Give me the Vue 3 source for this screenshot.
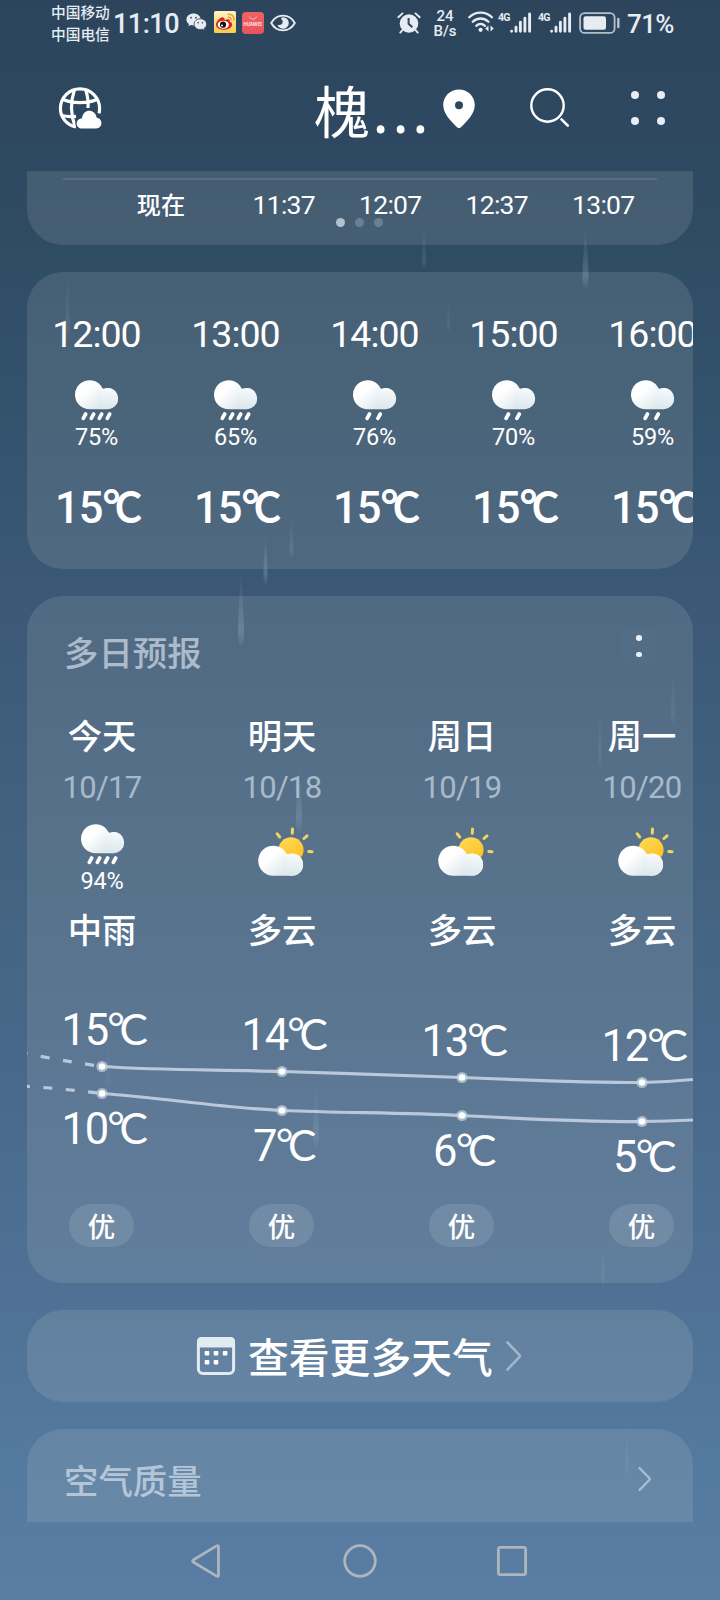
<script setup>
const nowcast = ['11:37', '12:07', '12:37', '13:07']

const hours = [
  { time: '12:00', rain: '75%', heavy: true, temp: 15 },
  { time: '13:00', rain: '65%', heavy: true, temp: 15 },
  { time: '14:00', rain: '76%', heavy: false, temp: 15 },
  { time: '15:00', rain: '70%', heavy: false, temp: 15 },
  { time: '16:00', rain: '59%', heavy: false, temp: 15 },
]

const days = [
  { name: '今天', date: '10/17', rain: '94%', text: '中雨', high: 15, low: 10, hy: 116.5, ly: 143.5 },
  { name: '明天', date: '10/18', text: '多云', high: 14, low: 7, hy: 121.5, ly: 160.5 },
  { name: '周日', date: '10/19', text: '多云', high: 13, low: 6, hy: 127.5, ly: 165.5 },
  { name: '周一', date: '10/20', text: '多云', high: 12, low: 5, hy: 132.5, ly: 171.5 },
]

const dayX = (i) => 75 + i * 180

// Falling rain behind the cards: x, top, length, width, opacity
const streaks = [
  [67.5, 270, 70, 5, 0.09],
  [424, 226, 42, 4, 0.12],
  [585.5, 225, 63, 6, 0.2],
  [448.5, 298, 34, 3, 0.08],
  [291.5, 515, 43, 4, 0.12],
  [265.5, 530, 54, 4, 0.2],
  [241, 570, 76, 6, 0.2],
  [299, 762, 70, 6, 0.16],
  [600, 700, 66, 4, 0.08],
  [673, 668, 56, 4, 0.08],
  [108, 1030, 60, 5, 0.06],
  [316, 1080, 68, 6, 0.13],
  [603, 1245, 40, 3, 0.1],
  [627, 1420, 55, 3, 0.08],
]

const streakPath = ([x, y, h, w]) =>
  `M${x} ${y}Q${x + w / 2} ${y + h * 0.6} ${x + w / 2} ${y + h * 0.85}Q${x + w / 2} ${y + h} ${x} ${y + h}` +
  `Q${x - w / 2} ${y + h} ${x - w / 2} ${y + h * 0.85}Q${x - w / 2} ${y + h * 0.6} ${x} ${y}z`
</script>

<template>
  <div class="screen">
    <svg class="rain" width="720" height="1600" viewBox="0 0 720 1600">
      <defs>
        <linearGradient id="streak" x1="0" y1="0" x2="0" y2="1">
          <stop offset="0" stop-color="#c8dcec" stop-opacity="0" />
          <stop offset="0.8" stop-color="#c8dcec" stop-opacity="1" />
          <stop offset="1" stop-color="#c8dcec" stop-opacity="0.2" />
        </linearGradient>
        <linearGradient id="cloudBig" x1="0" y1="0.1" x2="1" y2="0.9">
          <stop offset="0.3" stop-color="#ffffff" />
          <stop offset="0.75" stop-color="#dfe9ed" />
          <stop offset="1" stop-color="#e4edf1" />
        </linearGradient>
        <linearGradient id="cloudSmall" x1="0.5" y1="0" x2="0.4" y2="1">
          <stop offset="0" stop-color="#f6fafb" />
          <stop offset="1" stop-color="#dbe7ec" />
        </linearGradient>
        <linearGradient id="sun" x1="0" y1="0" x2="0.6" y2="1">
          <stop offset="0" stop-color="#ffdb5c" />
          <stop offset="1" stop-color="#fdc11f" />
        </linearGradient>
        <linearGradient id="weibo" x1="0" y1="0" x2="0" y2="1">
          <stop offset="0" stop-color="#fdf6c8" />
          <stop offset="1" stop-color="#f7cd4b" />
        </linearGradient>
      </defs>
      <path v-for="(s, i) in streaks" :key="i" :d="streakPath(s)" fill="url(#streak)" :opacity="s[4]" />
    </svg>

    <div class="status">
      <div class="carriers"><span>中国移动</span><span>中国电信</span></div>
      <span class="clock">11:10</span>
      <svg class="wechat" width="21" height="19" viewBox="0 0 21 19">
        <path d="M7.6 0.5C3.5 0.5 0.4 3.1 0.4 6.5c0 1.9 1 3.5 2.6 4.600l-.7 2.200 2.600-1.300c.9.300 1.700.4 2.700.4C11.700 12.400 14.700 9.800 14.700 6.500S11.700.5 7.600.5z" fill="#e6ecf2" />
        <path d="M14.300 5.800c-3.500 0-6.200 2.400-6.200 5.400s2.700 5.400 6.200 5.400c.8 0 1.500-.1 2.200-.3l2.200 1.200-.6-2c1.500-1 2.500-2.500 2.500-4.300 0-3-2.800-5.400-6.300-5.400z" fill="#e6ecf2" stroke="#2d475e" stroke-width="0.8" />
        <g fill="#2d475e">
          <circle cx="5" cy="4.700" r="0.9" /><circle cx="10" cy="4.700" r="0.9" />
          <circle cx="12.200" cy="9.700" r="0.8" /><circle cx="16.400" cy="9.700" r="0.8" />
        </g>
      </svg>
      <svg class="weibo" width="22" height="22" viewBox="0 0 22 22">
        <rect width="22" height="22" rx="1.500" fill="url(#weibo)" />
        <path d="M9.500 6.700C7.300 4.800 2.500 9.800 2 13.300c-.5 3.300 3.600 5.500 7.800 5.500 4.800 0 8.400-2.600 8.400-5.300 0-1.700-1.400-2.500-2.500-2.800.7-2.500-.8-3.300-5.300-1.700.4-1.200.2-1.900-.9-2.300z" fill="#d8231f" />
        <ellipse cx="9.300" cy="13.700" rx="5.600" ry="4" fill="#fff" />
        <circle cx="9" cy="13.700" r="3.100" fill="#151515" />
        <circle cx="8" cy="14.600" r="1" fill="#fff" />
        <path d="M14.300 6.300c2-.3 3 .8 2.700 2.600M14.200 3.400c4-.6 6.300 2 5.600 5.800" fill="none" stroke="#eba032" stroke-width="1.500" stroke-linecap="round" />
      </svg>
      <span class="mall">
        <svg width="22" height="10" viewBox="0 0 22 10"><path d="M7.500 4.500c.6 3.400 6.400 3.400 7 0" fill="none" stroke="#ffc9c9" stroke-width="0.9" /></svg>
        <b>HUAWEI</b>
      </span>
      <svg class="eye" width="26" height="18" viewBox="0 0 26 18">
        <path d="M1.200 9C6.500-.8 19.500-.8 24.800 9 19.500 18.800 6.500 18.800 1.200 9z" fill="none" stroke="#e6ecf2" stroke-width="1.900" />
        <path d="M13 3.200a5.800 5.800 0 1 1-5.600 7.200c2 1.300 5.300.300 5.300-2.500 0-1.900-1-2.600-1.800-2.900.2-.9.900-1.800 2.100-1.800z" fill="#e6ecf2" />
      </svg>

      <svg class="alarm" width="24" height="22" viewBox="0 0 24 22">
        <circle cx="12" cy="11.500" r="9.300" fill="#e6ecf2" />
        <path d="M1.300 5.200 5.500 1.400M22.700 5.200 18.500 1.400M5.500 18 3.300 20.600M18.500 18l2.200 2.600" stroke="#e6ecf2" stroke-width="1.900" stroke-linecap="round" />
        <path d="M11.600 6v5.800l3.700 3.400" fill="none" stroke="#2d475e" stroke-width="2" />
      </svg>
      <div class="speed"><span>24</span><span>B/s</span></div>
      <svg class="wifi" width="27" height="22" viewBox="0 0 27 22">
        <path d="M1.300 6.300c6.300-6.300 16.300-6.300 22.600 0M4.800 10.800c4.400-4.400 11.200-4.400 15.600 0M8.300 14.800c2.500-2.400 6.100-2.400 8.600 0" fill="none" stroke="#e6ecf2" stroke-width="2.300" stroke-linecap="round" />
        <circle cx="12.600" cy="18.800" r="2.100" fill="#e6ecf2" />
        <path d="m20.500 14.500-3.300 3 3.300 3zM22.500 14.500l3.300 3-3.300 3z" fill="#e6ecf2" />
      </svg>
      <div v-for="n in 2" :key="n" class="signal">
        <span>4G</span>
        <svg width="22" height="22" viewBox="0 0 22 22">
          <path d="M1.600 19.100v.2M6 15.200v4.100M10.400 10.200v9.100M14.900 6.100v13.200M19.600 2v17.300" stroke="#e6ecf2" stroke-width="2.900" stroke-linecap="round" />
        </svg>
      </div>
      <svg class="battery" width="42" height="22" viewBox="0 0 42 22">
        <rect x="1.100" y="1.100" width="34.500" height="19.800" rx="4.500" fill="none" stroke="#b4c0cb" stroke-width="1.800" />
        <rect x="4.500" y="4.200" width="22.500" height="13.600" rx="2.200" fill="#e6ecf2" />
        <path d="M39.300 7v8" stroke="#b4c0cb" stroke-width="2.500" stroke-linecap="round" />
      </svg>
      <span class="level">71%</span>
    </div>

    <header class="header">
      <svg class="globe" width="44" height="44" viewBox="0 0 44 44">
        <g fill="none" stroke="#fff" stroke-width="3.200">
          <path d="M18 41C8.500 38.800 2.400 31.300 2.400 22.400a19.600 19.600 0 0 1 39.200 0q0 2.700-.6 5" />
          <path d="M5 13.500c10 4.200 24 4.200 34 0M3.500 29.500c4 1 9.500 1.300 14.500.800M16.500 3.500C12.700 15 12.700 29 17 40M27.500 3.500C29.700 9.500 30.500 15 30 22" />
        </g>
        <path d="M24.500 42.500c-7.500 0-8-9.500-.5-10.300 1-9.500 13-10 14.700-.5 6.500.6 6.300 10.800-.7 10.800z" fill="#fff" stroke="#2d475e" stroke-width="2.500" paint-order="stroke" />
      </svg>
      <h1 class="city">槐<span>...</span></h1>
      <svg class="pin" width="34" height="42" viewBox="0 0 34 42">
        <path fill-rule="evenodd" d="M17 1.500C8 1.500 1.200 8.600 1.200 17c0 9 8.500 16.800 13.300 21.800 1.800 1.800 3.200 1.800 5 0C24.300 33.800 32.800 26 32.800 17 32.800 8.600 26 1.500 17 1.500zM17 13.300a4 4 0 1 1 0 8 4 4 0 0 1 0-8z" fill="#fff" />
      </svg>
      <svg class="search" width="42" height="42" viewBox="0 0 42 42">
        <circle cx="18.500" cy="18.500" r="16.200" fill="none" stroke="#fff" stroke-width="2.400" />
        <path d="m32.500 32.300 6.300 6.300" stroke="#fff" stroke-width="2.600" stroke-linecap="round" />
      </svg>
      <span class="grid-dots"><i /><i /><i /><i /></span>
    </header>

    <main class="content">
      <section class="card nowcast">
        <div class="axis" />
        <div class="ticks">
          <span class="now">现在</span>
          <span v-for="t in nowcast" :key="t">{{ t }}</span>
        </div>
        <div class="pager"><i class="on" /><i /><i /></div>
      </section>

      <section class="card hourly">
        <div v-for="h in hours" :key="h.time" class="hour">
          <span class="time">{{ h.time }}</span>
          <svg class="rainy" width="45" height="44" viewBox="0 0 45 44">
            <path d="M15.500 30.200A14.500 14.500 0 1 1 28.500 9.200Q31 11 33.500 9A10.600 10.600 0 0 1 33.500 30.200z" fill="url(#cloudBig)" />
            <circle cx="33.500" cy="19.600" r="10.600" fill="url(#cloudSmall)" />
            <path
              :d="h.heavy ? 'm11.700 35-2.400 4.300M19.700 35l-2.400 4.300M27.700 35l-2.400 4.300M35.700 35l-2.400 4.300' : 'm17.500 35-2.400 4.300M28.300 35l-2.400 4.300'"
              stroke="#fff" stroke-width="3.700" stroke-linecap="round"
            />
          </svg>
          <span class="percent">{{ h.rain }}</span>
          <span class="temp">{{ h.temp }}<b class="deg">°</b><b class="cel">C</b></span>
        </div>
      </section>

      <section class="card daily">
        <div class="title-row">
          <h2>多日预报</h2>
          <span class="menu"><i /><i /></span>
        </div>
        <div class="days">
          <div v-for="d in days" :key="d.date" class="day">
            <span class="name">{{ d.name }}</span>
            <span class="date">{{ d.date }}</span>
            <div class="icon">
              <template v-if="d.rain">
                <svg width="45" height="44" viewBox="0 0 45 44">
                  <path d="M15.500 30.200A14.500 14.500 0 1 1 28.500 9.200Q31 11 33.500 9A10.600 10.600 0 0 1 33.500 30.200z" fill="url(#cloudBig)" />
                  <circle cx="33.500" cy="19.600" r="10.600" fill="url(#cloudSmall)" />
                  <path d="m11.700 35-2.400 4.300M19.700 35l-2.400 4.300M27.700 35l-2.400 4.300M35.700 35l-2.400 4.300" stroke="#fff" stroke-width="3.700" stroke-linecap="round" />
                </svg>
                <span class="percent">{{ d.rain }}</span>
              </template>
              <svg v-else width="64" height="58" viewBox="0 0 64 58">
                <circle cx="41" cy="26.800" r="12.600" fill="url(#sun)" />
                <path d="M42.300 10.200l.2-4.200M54 15.500l3-2.700M58.800 28.500l3.200.3M29.700 14l-2.500-3.200" stroke="#f3d55e" stroke-width="3" stroke-linecap="round" />
                <path d="M23.300 52.800A15 15 0 1 1 36.500 30.800Q38.500 32 42 30.600A11.100 11.100 0 0 1 42 52.800z" fill="url(#cloudBig)" />
                <circle cx="42" cy="41.700" r="11.100" fill="url(#cloudSmall)" />
              </svg>
            </div>
            <span class="name">{{ d.text }}</span>
          </div>
        </div>

        <svg class="chart" width="666" height="240" viewBox="0 0 666 240">
          <g fill="none" stroke="#b9c8da" stroke-width="3.200">
            <path d="M-8 102 Q30 110 75 116.500" stroke-dasharray="9 13.500" />
            <path d="M-6 136 Q30 138 75 143.500" stroke-dasharray="9 13.500" />
            <path d="M75 116.500C135 120.500 195 119.500 255 121.500S375 125 435 127.500S555 132.500 615 132.500Q640 132 666 129.500" />
            <path d="M75 143.500C135 147.500 195 158 255 160.500S375 162.500 435 165.500S555 172 615 171.500Q640 171.500 666 170" />
          </g>
          <g v-for="(d, i) in days" :key="d.date">
            <g v-for="y in [d.hy, d.ly]" :key="y">
              <circle :cx="dayX(i)" :cy="y" r="5.600" fill="#c3d0df" fill-opacity="0.75" />
              <circle :cx="dayX(i)" :cy="y" r="3.300" fill="#fff" />
            </g>
            <text :x="dayX(i) + 2" :y="d.hy - 21.500">{{ d.high }}<tspan class="unit" dx="-0.500" dy="-2">°</tspan><tspan class="unit" dx="-4" dy="2">C</tspan></text>
            <text :x="dayX(i) + 2" :y="d.ly + 50">{{ d.low }}<tspan class="unit" dx="-0.500" dy="-2">°</tspan><tspan class="unit" dx="-4" dy="2">C</tspan></text>
          </g>
        </svg>

        <div class="quality">
          <span v-for="d in days" :key="d.date"><em>优</em></span>
        </div>
      </section>

      <section class="card more">
        <svg width="40" height="40" viewBox="0 0 40 40">
          <rect x="2.400" y="2.400" width="35.200" height="35.200" rx="4.500" fill="none" stroke="#e2eaf2" stroke-width="3" />
          <path d="M1 11.500V5.500Q1 1 5.500 1h29Q39 1 39 5.500v6z" fill="#e2eaf2" />
          <g fill="#fff">
            <rect x="8.700" y="15" width="4.600" height="4.600" rx="0.8" /><rect x="17.700" y="15" width="4.600" height="4.600" rx="0.8" />
            <rect x="26.800" y="15" width="4.600" height="4.600" rx="0.8" /><rect x="8.700" y="24" width="4.600" height="4.600" rx="0.8" />
            <rect x="17.700" y="24" width="4.600" height="4.600" rx="0.8" />
          </g>
        </svg>
        <span>查看更多天气</span>
        <svg width="18" height="32" viewBox="0 0 18 32">
          <path d="M2.500 2.500 14.300 14.800q1.100 1.200 0 2.400L2.500 29.500" fill="none" stroke="#9eb5ca" stroke-width="2.700" stroke-linecap="round" />
        </svg>
      </section>

      <section class="card air">
        <h2>空气质量</h2>
        <svg width="16" height="26" viewBox="0 0 16 26">
          <path d="M2.500 2 12.300 12q1 1 0 2L2.500 24" fill="none" stroke="#a9bed2" stroke-width="2.400" stroke-linecap="round" />
        </svg>
      </section>
    </main>

    <nav class="nav">
      <svg width="32" height="36" viewBox="0 0 32 36"><path d="M3.600 16.700 26.500 2.900q2-1 2 1.200v27.800q0 2.200-2 1.200L3.600 19.300q-2-1.300 0-2.600z" fill="none" stroke="#aeb5bc" stroke-width="2.800" /></svg>
      <svg width="36" height="36" viewBox="0 0 36 36"><circle cx="18" cy="18" r="15.300" fill="none" stroke="#aeb5bc" stroke-width="2.800" /></svg>
      <svg width="32" height="32" viewBox="0 0 32 32"><rect x="2.400" y="2.400" width="27.200" height="27.200" rx="1.500" fill="none" stroke="#aeb5bc" stroke-width="2.800" /></svg>
    </nav>
  </div>
</template>

<style>
body {
  margin: 0;
  background: #2c465d;
}
</style>

<style scoped>
.screen {
  position: relative;
  width: 720px;
  height: 1600px;
  overflow: hidden;
  display: flex;
  flex-direction: column;
  color: #fff;
  font-family: "Noto Sans", "Noto Sans CJK SC", sans-serif;
  background: linear-gradient(180deg, #2c455c 0, #2d4860 130px, #304e67 300px, #35546f 460px, #3b5977 600px, #42627f 850px, #48698a 1080px, #4e7195 1290px, #54799e 1450px, #597da3 1600px);
}
.screen svg { display: block; flex: none; }
.rain { position: absolute; left: 0; top: 0; }

.status {
  position: relative;
  flex: none;
  display: flex;
  align-items: center;
  height: 46px;
  padding-left: 51px;
  box-sizing: border-box;
  color: #e6ecf2;
  white-space: nowrap;
}
.carriers { display: flex; flex-direction: column; width: 60px; font-size: 14.7px; line-height: 22px; font-weight: 500; }
.clock { width: 72px; margin-left: 2px; font: 500 27px/46px Roboto, sans-serif; letter-spacing: -0.5px; padding-top: 2px; }
.wechat { margin-left: 1px; margin-top: -2px; }
.weibo { margin-left: 6.500px; margin-top: -2px; }
.mall { display: flex; flex-direction: column; align-items: center; width: 22px; height: 22px; margin-left: 6px; border-radius: 4px; background: linear-gradient(#f0635f, #e9525c); }
.mall b { font-size: 4.5px; line-height: 5px; color: #ffe6e6; }
.eye { margin-left: 6.500px; }
.alarm { margin-left: 101px; }
.speed { display: flex; flex-direction: column; align-items: center; width: 24px; margin-left: 12px; padding-top: 1px; font-size: 15px; line-height: 15px; font-family: Roboto, sans-serif; font-weight: 500; }
.wifi { margin-left: 11px; margin-top: -2px; }
.signal { display: flex; align-items: flex-start; width: 34px; height: 22px; margin-left: 3px; margin-top: -1px; }
.signal + .signal { margin-left: 6px; }
.signal span { width: 12px; font: 700 10.5px/11px "Roboto", sans-serif; letter-spacing: -0.8px; }
.battery { margin-left: 7px; }
.level { margin-left: 6px; font: 500 26px/46px Roboto, sans-serif; letter-spacing: -0.6px; padding-top: 2px; }

.header { position: relative; flex: none; display: flex; align-items: center; height: 125px; }
.globe { margin-left: 58px; margin-top: -2px; }
.city { width: 122px; margin: 6px 0 0 212px; font-size: 56px; line-height: 70px; font-weight: 400; white-space: nowrap; padding-bottom: 1px; }
.city span { letter-spacing: 4.7px; margin-left: 3px; font-weight: 500; }
.pin { margin-left: 6px; margin-top: 1px; }
.search { margin-left: 53px; margin-top: -1px; }
.grid-dots { display: grid; grid-template-columns: 8px 8px; gap: 18px; margin-left: 60px; margin-top: -1px; }
.grid-dots i { width: 8px; height: 8px; border-radius: 50%; background: #e8edf2; }

.content { position: relative; flex: none; display: flex; flex-direction: column; gap: 27px; height: 1351px; margin: 0 27px; overflow: hidden; }
.card { flex: none; box-sizing: border-box; overflow: hidden; border-radius: 36px; background: rgba(238, 232, 226, 0.12); }
.card h2 { margin: 0; font-size: 34.4px; line-height: 40px; font-weight: 500; color: rgba(226, 236, 246, 0.64); }

.nowcast { height: 74px; border-radius: 0 0 36px 36px; padding-top: 7px; }
.axis { height: 2px; margin: 0 36px; background: rgba(170, 170, 190, 0.22); }
.ticks { display: flex; margin-top: 9px; height: 32px; font: 400 26.5px/32px Roboto, sans-serif; letter-spacing: -0.7px; }
.ticks span { flex: none; width: 106.5px; text-align: center; }
.ticks .now { width: 123px; margin: 0 8px 0 72.500px; font: 500 24.2px/31px "Noto Sans", "Noto Sans CJK SC", sans-serif; letter-spacing: 0; }
.pager { display: flex; justify-content: center; gap: 10px; margin-top: -3px; padding-right: 1px; }
.pager i { width: 9px; height: 9px; border-radius: 50%; background: rgba(200, 215, 235, 0.28); }
.pager .on { background: #b3c0ce; }

.hourly { display: flex; height: 297px; padding-top: 36px; }
.hour { flex: none; width: 139px; display: flex; flex-direction: column; align-items: center; }
.time { height: 50px; font: 400 37.5px/52px Roboto, sans-serif; letter-spacing: -1px; }
.rainy { margin-top: 21px; }
.percent { font: 400 23.5px/28px Roboto, sans-serif; height: 26px; letter-spacing: -0.2px; }
.temp { margin-top: 35px; padding-left: 6px; font: 500 43.5px/50px Roboto, sans-serif; white-space: nowrap; letter-spacing: -1px; }
.temp b { font-family: Lato, sans-serif; font-weight: 700; font-size: 43px; line-height: 1px; }
.temp .deg { position: relative; top: -2px; margin: 0 -4px 0 0; }
.temp .cel { display: inline-block; transform: scaleX(0.94); transform-origin: 0 50%; letter-spacing: 0; }

.daily { height: 687px; padding-top: 37px; }
.title-row { display: flex; justify-content: space-between; align-items: flex-start; padding: 0 36px 0 37px; height: 40px; }
.menu { display: flex; flex-direction: column; align-items: center; justify-content: center; gap: 11px; width: 36px; height: 36px; margin-top: -5px; border-radius: 9px; background: rgba(255, 255, 255, 0.015); }
.menu i { width: 5.5px; height: 5.5px; border-radius: 50%; background: #eaf1f7; }
.days { display: flex; margin-top: 43px; margin-left: -15px; }
.day { flex: none; width: 180px; display: flex; flex-direction: column; align-items: center; }
.name { font-size: 34.3px; line-height: 40px; font-weight: 500; }
.date { margin-top: 13px; font: 400 31px/38px Roboto, sans-serif; height: 36px; letter-spacing: -0.7px; color: rgba(226, 236, 246, 0.6); }
.icon { display: flex; flex-direction: column; align-items: center; height: 72px; margin: 18px 0 15px; }
.chart text { fill: #fff; font: 400 43.5px Roboto, sans-serif; text-anchor: middle; letter-spacing: -1.4px; }
.chart .unit { font-family: Lato, sans-serif; font-size: 42.5px; }
.quality { display: flex; margin: 14px 0 0 -15.500px; }
.quality span { flex: none; width: 180px; display: flex; justify-content: center; }
.quality em { width: 65px; height: 43px; border-radius: 22px; background: rgba(200, 205, 220, 0.17); font-style: normal; font-weight: 500; font-size: 27.500px; line-height: 46px; text-align: center; }

.more { display: flex; align-items: center; height: 92px; padding-left: 169px; font-size: 40.8px; line-height: 50px; font-weight: 500; }
.more span { margin-left: 12px; padding-top: 2px; }
.more svg:last-child { margin-left: 12px; }
.air { display: flex; justify-content: space-between; height: 93px; padding: 32px 40px 0 37px; border-radius: 36px 36px 0 0; }
.air svg { margin-top: 5px; }

.nav { position: relative; flex: none; display: flex; align-items: center; height: 78px; padding-left: 190px; }
.nav svg:nth-child(2) { margin-left: 120px; }
.nav svg:nth-child(3) { margin-left: 118px; }
</style>
